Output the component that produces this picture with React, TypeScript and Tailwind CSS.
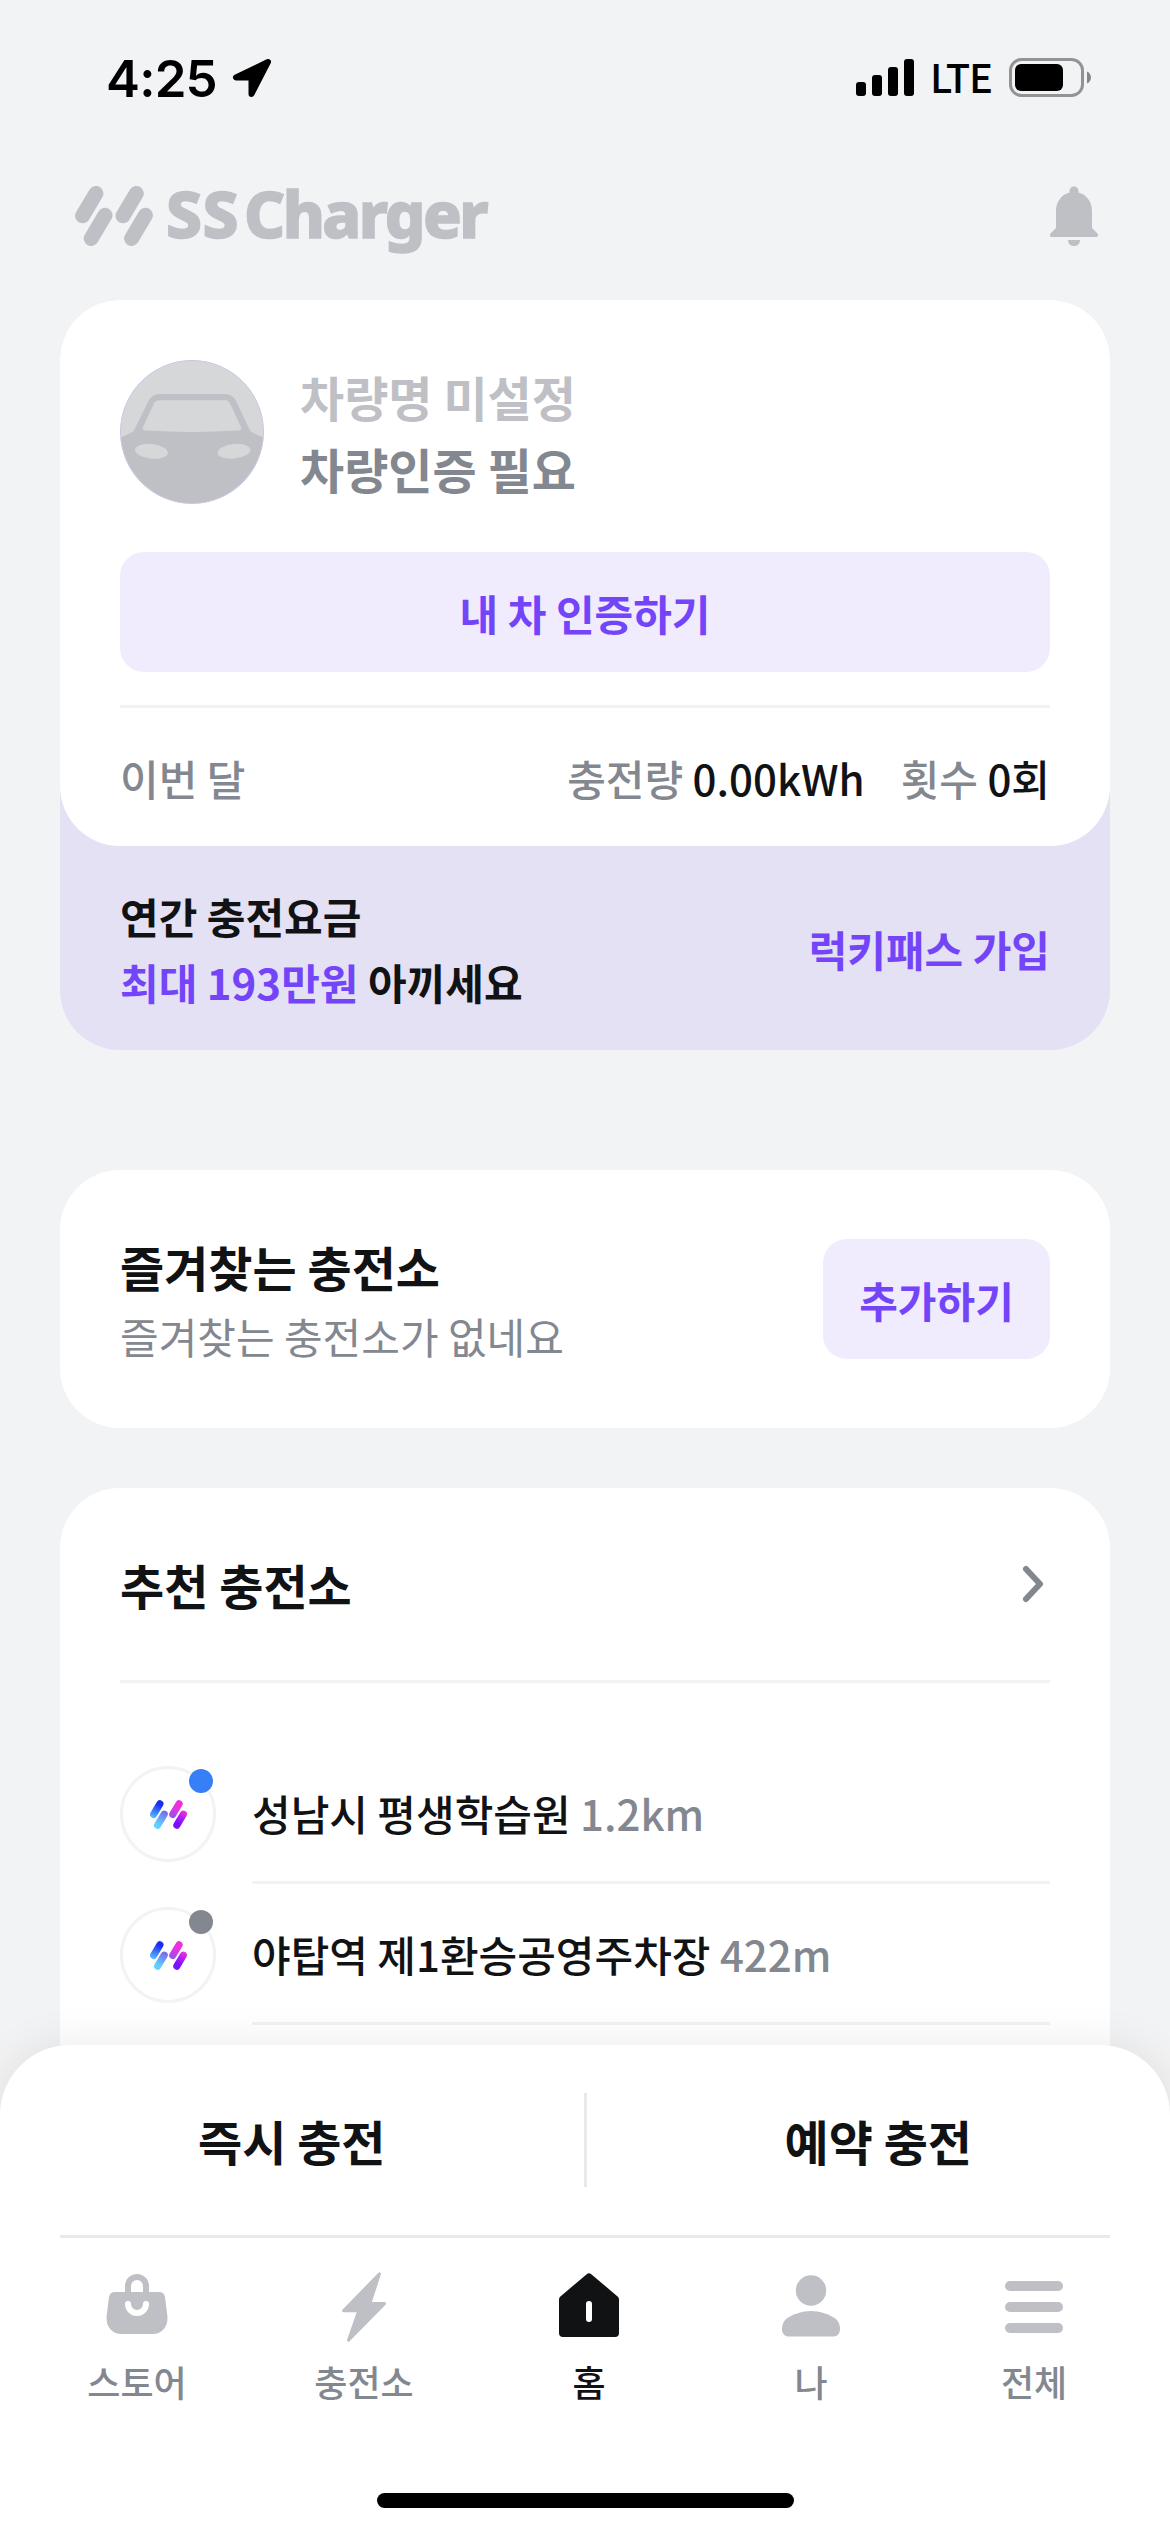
import React from "react";
import clsx from "clsx";

type Station = {
  name: string;
  distance: string;
  available: boolean;
};

type Tab = {
  label: string;
  icon: React.ReactNode;
  width: string;
  active?: boolean;
};

const stations: Station[] = [
  { name: "성남시 평생학습원", distance: "1.2km", available: true },
  { name: "야탑역 제1환승공영주차장", distance: "422m", available: false },
];

// Four slanted pills, shared by the header logo and the station badges
const LogoMark: React.FC<{ className?: string; colors: string[] }> = ({ className, colors }) => (
  <svg viewBox="0 0 78 60" className={className} fill="none" strokeWidth="15" strokeLinecap="round">
    <path d="M20.9 7.5 7.6 29.8" stroke={colors[0]} />
    <path d="M30 29.2 16.2 52.5" stroke={colors[1]} />
    <path d="M61.3 7.5 48 29.8" stroke={colors[2]} />
    <path d="M70.4 29.2 56.6 52.5" stroke={colors[3]} />
  </svg>
);

const StatusBar: React.FC = () => (
  <div className="flex h-[156px] items-center justify-between pr-[79px] pl-[106px] text-black">
    <div className="flex items-center gap-[15px]">
      <span className="font-['Inter',sans-serif] text-[51px] leading-none font-semibold tracking-[-0.8px]">
        4:25
      </span>
      <svg width="40" height="40" viewBox="0 0 40 40">
        <path
          d="M36 4 4 19.5H19.5V36Z"
          fill="currentColor"
          stroke="currentColor"
          strokeWidth="6"
          strokeLinejoin="round"
        />
      </svg>
    </div>
    <div className="flex items-center">
      <svg width="58" height="38" viewBox="0 0 58 38" fill="currentColor">
        <rect x="0" y="23" width="10" height="14" rx="3" />
        <rect x="16" y="16" width="10" height="21" rx="3" />
        <rect x="32" y="8" width="10" height="29" rx="3" />
        <rect x="48" y="0" width="10" height="37" rx="3" />
      </svg>
      <span className="mb-[5px] ml-[16px] w-[79px] text-[40px] leading-none font-medium tracking-[-1.2px]">
        LTE
      </span>
      <svg width="82" height="40" viewBox="0 0 82 40">
        <rect x="1.5" y="1.5" width="72" height="36" rx="11" fill="none" stroke="#929395" strokeWidth="3" />
        <rect x="6" y="6" width="48" height="27" rx="6" fill="currentColor" />
        <path d="M78 13.5c5.3 2 5.3 10 0 12z" fill="#85868a" />
      </svg>
    </div>
  </div>
);

const BrandHeader: React.FC = () => (
  <header className="mb-6 flex h-[120px] items-center justify-between pr-[72px] pl-[75px] text-[#bfc0c6]">
    <div className="flex items-center">
      <LogoMark
        className="h-[60px] w-[78px]"
        colors={["currentColor", "currentColor", "currentColor", "currentColor"]}
      />
      <span className="mb-[4px] ml-[13px] font-['Noto_Sans',sans-serif] text-[64px] leading-none font-extrabold tracking-[0.5px] [-webkit-text-stroke:1.5px_#bfc0c6]">
        SS<span className="ml-[5px] tracking-[-2.6px]">Charger</span>
      </span>
    </div>
    <svg width="48" height="60" viewBox="0 0 48 60" fill="currentColor">
      <circle cx="24" cy="5" r="4.5" />
      <path d="M6 25C6 14 13.500 6 24 6s18 8 18 19v17l5 5c2 2 1 4-1 4H2c-2 0-3-2-1-4l5-5z" />
      <path d="M18 54h12c0 8-12 8-12 0z" />
    </svg>
  </header>
);

const CarAvatar: React.FC = () => (
  <div className="h-36 w-36 overflow-hidden rounded-full border border-[#cbc6e6] bg-[#d6d7d9]">
    <svg width="142" height="142" viewBox="1 1 142 142">
      <path
        d="M0 78 13.400 71.500 28 42Q31.500 34 39.500 34H105Q113 34 116.500 42L130.500 71.500 144 78V144H0z"
        fill="#bfc0c6"
      />
      <path
        d="M40 40.300H105Q108.500 40.300 110 43.500L121 67Q122 70.300 118.500 70.600 72 73.500 25.500 70.600 22 70.300 23 67L34 43.500Q35.500 40.300 40 40.300z"
        fill="#d6d7d9"
      />
      <ellipse cx="31.400" cy="91.300" rx="16.500" ry="7.300" transform="rotate(6 31.400 91.300)" fill="#d6d7d9" />
      <ellipse cx="114" cy="91.300" rx="16.500" ry="7.300" transform="rotate(-6 114 91.300)" fill="#d6d7d9" />
    </svg>
  </div>
);

const VehicleCard: React.FC = () => (
  <section className="mx-[60px] rounded-[60px] bg-[#e4e1f4]">
    <div className="h-[546px] rounded-[60px] bg-white px-[60px] pt-[60px]">
      <div className="flex items-center gap-9">
        <CarAvatar />
        <div className="text-[48px] leading-[72px] font-bold">
          <p className="text-[#bfc0c6]">차량명 미설정</p>
          <p className="text-[#83878f]">차량인증 필요</p>
        </div>
      </div>
      <button className="mt-12 block h-[120px] w-full rounded-3xl bg-[#f0ebfd] text-[42px] font-bold text-[#7445f8]">
        내 차 인증하기
      </button>
      <div className="mt-[33px] flex h-[141px] items-center justify-between border-t-3 border-[#f1f2f4] text-[42px] font-medium text-[#83878f]">
        <span>이번 달</span>
        <div className="flex gap-9">
          <span>
            충전량 <span className="text-[#111214]">0.00kWh</span>
          </span>
          <span>
            횟수 <span className="text-[#111214]">0회</span>
          </span>
        </div>
      </div>
    </div>
    <div className="flex h-[204px] items-center justify-between px-[60px] pt-[2px] text-[42px] leading-[66px] font-bold">
      <div className="text-[#111214]">
        <p>연간 충전요금</p>
        <p>
          <span className="text-[#7445f8]">최대 193만원</span> 아끼세요
        </p>
      </div>
      <span className="text-[#7445f8]">럭키패스 가입</span>
    </div>
  </section>
);

const FavoriteCard: React.FC = () => (
  <section className="mx-[60px] mt-[120px] flex h-[258px] items-center justify-between rounded-[60px] bg-white px-[60px]">
    <div className="pt-[2px]">
      <h2 className="text-[48px] leading-[72px] font-bold text-[#111214]">즐겨찾는 충전소</h2>
      <p className="text-[42px] leading-[68px] text-[#83878f]">즐겨찾는 충전소가 없네요</p>
    </div>
    <button className="h-[120px] w-[227px] rounded-3xl bg-[#f0ebfd] text-[42px] font-bold text-[#7445f8]">
      추가하기
    </button>
  </section>
);

const StationRow: React.FC<{ station: Station }> = ({ station }) => (
  <li className="flex h-[141px] gap-9">
    <div className="relative mt-[23px] flex h-24 w-24 shrink-0 items-center justify-center rounded-full border-3 border-[#f1f3f4]">
      <LogoMark
        className="h-[29px] w-[37px]"
        colors={["url(#pill-blue)", "url(#pill-sky)", "url(#pill-pink)", "url(#pill-violet)"]}
      />
      {/* Availability dot */}
      <span
        className={clsx(
          "absolute top-0 right-0 h-6 w-6 rounded-full",
          station.available ? "bg-[#377ff7]" : "bg-[#83878f]"
        )}
      />
    </div>
    <div className="flex flex-1 items-center border-b-3 border-[#f1f2f4] text-[42px] font-medium text-[#111214]">
      <p>
        {station.name} <span className="text-[#83878f]">{station.distance}</span>
      </p>
    </div>
  </li>
);

const RecommendedCard: React.FC = () => (
  <section className="mx-[60px] mt-[60px] rounded-t-[60px] bg-white px-[60px]">
    {/* Gradients used by the badge logos below */}
    <svg width="0" height="0" className="absolute">
      <defs>
        <linearGradient id="pill-blue" gradientUnits="userSpaceOnUse" x1="20" y1="5" x2="8" y2="36">
          <stop offset="0.1" stopColor="#1a2cf5" />
          <stop offset="1" stopColor="#55b8fb" />
        </linearGradient>
        <linearGradient id="pill-sky" gradientUnits="userSpaceOnUse" x1="32" y1="24" x2="16" y2="56">
          <stop offset="0" stopColor="#7a68ea" />
          <stop offset="0.85" stopColor="#5fd0ff" />
        </linearGradient>
        <linearGradient id="pill-pink" gradientUnits="userSpaceOnUse" x1="61" y1="5" x2="47" y2="36">
          <stop offset="0.25" stopColor="#f02fdc" />
          <stop offset="1" stopColor="#9a50f0" />
        </linearGradient>
        <linearGradient id="pill-violet" gradientUnits="userSpaceOnUse" x1="71" y1="24" x2="56" y2="56">
          <stop offset="0" stopColor="#e82fdc" />
          <stop offset="0.75" stopColor="#7a10ff" />
        </linearGradient>
      </defs>
    </svg>
    <div className="flex h-[195px] items-center justify-between border-b-3 border-[#f1f2f4]">
      <h2 className="text-[48px] leading-[72px] font-bold text-[#111214]">추천 충전소</h2>
      <svg
        width="30"
        height="42"
        viewBox="0 0 30 42"
        fill="none"
        stroke="#83878f"
        strokeWidth="6"
        strokeLinecap="round"
        strokeLinejoin="round"
      >
        <path d="M6 6l14 15L6 36" />
      </svg>
    </div>
    <ul className="mt-[60px]">
      {stations.map((station) => (
        <StationRow key={station.name} station={station} />
      ))}
    </ul>
    <div className="h-10" />
  </section>
);

const StoreIcon = () => (
  <svg width="72" height="72" viewBox="0 0 72 72" fill="none" strokeWidth="6" strokeLinecap="round">
    <path
      d="M14 21H58q5 0 6 5l2.500 20C67 56 60.500 63 52 63H20C11.500 63 5 56 5.500 46L8 26q1-5 6-5z"
      fill="#bfc0c6"
    />
    <path d="M27 23V15a9 9 0 0 1 18 0v8" stroke="#bfc0c6" />
    <path d="M27 33a9 9 0 0 0 18 0" stroke="#fff" />
  </svg>
);

const BoltIcon = () => (
  <svg width="72" height="72" viewBox="0 0 72 72">
    <path
      d="M51.500 2.800 41.800 32.600H56.500L20.500 69.300 30.800 39.800H15.500Z"
      fill="#bfc0c6"
      stroke="#bfc0c6"
      strokeWidth="3"
      strokeLinejoin="round"
    />
  </svg>
);

const HomeIcon = () => (
  <svg width="72" height="72" viewBox="0 0 72 72">
    <path
      d="M36 6.500 62 28.500V62H10V28.500Z"
      fill="#111214"
      stroke="#111214"
      strokeWidth="8"
      strokeLinejoin="round"
    />
    <rect x="33" y="30" width="6" height="21" rx="3" fill="#fff" />
  </svg>
);

const PersonIcon = () => (
  <svg width="72" height="72" viewBox="0 0 72 72" fill="#bfc0c6">
    <circle cx="36" cy="19.500" r="15.200" />
    <path d="M7 58c0-4 1-7 4-10 7-5 16-8 25-8s18 3 25 8c3 3 4 6 4 10 0 5-3 7.500-7 7.500H14c-4 0-7-2.500-7-7.500z" />
  </svg>
);

const MenuIcon = () => (
  <svg width="72" height="72" viewBox="0 0 72 72" fill="#bfc0c6">
    <rect x="7" y="10" width="58" height="10" rx="5" />
    <rect x="7" y="31" width="58" height="10" rx="5" />
    <rect x="7" y="52" width="58" height="10" rx="5" />
  </svg>
);

const tabs: Tab[] = [
  { label: "스토어", icon: <StoreIcon />, width: "w-[228px]" },
  { label: "충전소", icon: <BoltIcon />, width: "w-[226px]" },
  { label: "홈", icon: <HomeIcon />, width: "w-[224px]", active: true },
  { label: "나", icon: <PersonIcon />, width: "w-[220px]" },
  { label: "전체", icon: <MenuIcon />, width: "w-[226px]" },
];

const BottomSheet: React.FC = () => (
  <div className="relative h-[487px] shrink-0 bg-[#f3f3f3]">
    <div className="flex h-full flex-col rounded-t-[70px] bg-white shadow-[0_0_45px_rgba(0,0,0,0.09)]">
      <div className="mx-[60px] flex h-[193px] items-center border-b-3 border-[#e9e9e9] text-[48px] font-bold text-[#111214]">
        <button className="flex-1 pr-[60px]">즉시 충전</button>
        <span className="h-[94px] w-[3px] bg-[#e9e9e9]" />
        <button className="flex-1 pl-[60px]">예약 충전</button>
      </div>
      <nav className="flex pt-[33px] pl-[23px]">
        {tabs.map((tab) => (
          <button key={tab.label} className={clsx("flex flex-col items-center gap-[11px]", tab.width)}>
            {tab.icon}
            <span
              className={clsx(
                "text-[36px] leading-[54px] font-medium",
                tab.active ? "text-[#111214]" : "text-[#83878f]"
              )}
            >
              {tab.label}
            </span>
          </button>
        ))}
      </nav>
      {/* Home indicator */}
      <div className="mt-auto mb-6 ml-[377px] h-[15px] w-[417px] rounded-full bg-black" />
    </div>
  </div>
);

const App: React.FC = () => {
  return (
    <div className="flex h-[2532px] w-[1170px] flex-col overflow-hidden bg-[#f1f3f5] font-['Noto_Sans_CJK_KR',sans-serif]">
      <main className="h-[2045px] overflow-hidden">
        <StatusBar />
        <BrandHeader />
        <VehicleCard />
        <FavoriteCard />
        <RecommendedCard />
      </main>
      <BottomSheet />
    </div>
  );
};

export default App;
